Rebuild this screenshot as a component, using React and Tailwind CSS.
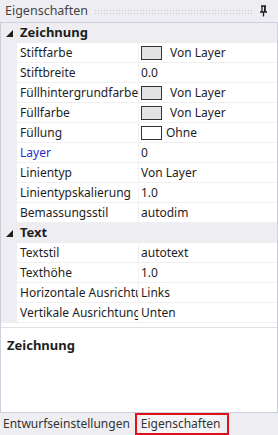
import React from "react";

const font = { fontFamily: '"Noto Sans", "Open Sans", Arial, sans-serif' };

const rows = [
  { type: "cat", label: "Zeichnung" },
  { label: "Stiftfarbe", value: "Von Layer", swatch: "fill" },
  { label: "Stiftbreite", value: "0.0" },
  { label: "Füllhintergrundfarbe", value: "Von Layer", swatch: "fill" },
  { label: "Füllfarbe", value: "Von Layer", swatch: "fill" },
  { label: "Füllung", value: "Ohne", swatch: "empty" },
  { label: "Layer", value: "0", blue: true },
  { label: "Linientyp", value: "Von Layer" },
  { label: "Linientypskalierung", value: "1.0" },
  { label: "Bemassungsstil", value: "autodim" },
  { type: "cat", label: "Text" },
  { label: "Textstil", value: "autotext" },
  { label: "Texthöhe", value: "1.0" },
  { label: "Horizontale Ausrichtung", value: "Links" },
  { label: "Vertikale Ausrichtung", value: "Unten" },
];

function Row({ row }) {
  if (row.type === "cat") {
    return (
      <div className="flex h-[20px] items-center bg-[#eeeef2]">
        <div className="flex w-[16px] justify-center">
          <svg width="7" height="7" viewBox="0 0 7 7">
            <path d="M7 0 L7 7 L0 7 Z" fill="#1e1e1e" />
          </svg>
        </div>
        <span className="pl-[3px] text-[13px] font-bold text-[#1e1e1e]">{row.label}</span>
      </div>
    );
  }
  return (
    <div className="flex h-[20px] bg-[#eeeef2]">
      <div className="w-[16px]" />
      <div className="flex flex-1 border-b border-[#f0f0f0] bg-white">
        <div
          className={`w-[121px] overflow-hidden whitespace-nowrap pl-[3px] leading-[19px] ${
            row.blue ? "text-[#2b2bd0]" : "text-[#1e1e1e]"
          }`}
        >
          {row.label}
        </div>
        <div className="w-[1px] bg-[#f0f0f0]" />
        <div className="flex flex-1 items-center pl-[2px] text-[#1e1e1e]">
          {row.swatch === "fill" && (
            <span className="mr-[8px] h-[14px] w-[21px] border border-[#333] bg-[#e3e3e3]" />
          )}
          {row.swatch === "empty" && (
            <span className="mr-[4px] h-[14px] w-[21px] border border-[#333] bg-white" />
          )}
          <span className="leading-[19px]">{row.value}</span>
        </div>
      </div>
    </div>
  );
}

export default function App() {
  return (
    <div className="flex h-[435px] w-[278px] flex-col bg-[#eeeef2] text-[12px]" style={font}>
      {/* title bar */}
      <div className="flex h-[22px] items-center pl-[5px] pr-[10px]">
        <span className="text-[12.5px] text-[#444]">Eigenschaften</span>
        <div className="mx-[6px] h-[5px] flex-1 bg-[radial-gradient(#c8c8cc_1px,transparent_1px)] bg-[length:3px_3px]" />
        <svg width="9" height="12" viewBox="0 0 9 12">
          <path d="M2 1 H7 M3 1 V7 M6 1 V7 M1 7 H8 M4.5 7 V11.5" stroke="#1e1e1e" strokeWidth="1.3" fill="none" />
          <rect x="5" y="1" width="1.5" height="6" fill="#1e1e1e" />
        </svg>
      </div>

      {/* grid */}
      <div className="flex flex-1 flex-col border border-[#ccd0dc] bg-white">
        <div className="flex flex-col">
          {rows.map((r, i) => (
            <Row key={i} row={r} />
          ))}
        </div>
        <div className="h-[4px] bg-white" />
        <div className="h-[1px] bg-[#e0e0e6]" />
        <div className="flex-1 bg-white px-[6px] pt-[8px]">
          <div className="text-[13px] font-bold text-[#1e1e1e]">Zeichnung</div>
        </div>
      </div>

      {/* tabs */}
      <div className="flex h-[22px] items-stretch">
        <div className="flex items-center pl-[3px] pr-[3px] text-[12px] text-[#333]">Entwurfseinstellungen</div>
        <div className="ml-[2px] flex w-[94px] items-center border-2 border-[#e0101a] pl-[4px] text-[12px] text-[#333]">
          <span className="bg-[#f5f5f7]">Eigenschaften</span>
        </div>
      </div>
    </div>
  );
}
